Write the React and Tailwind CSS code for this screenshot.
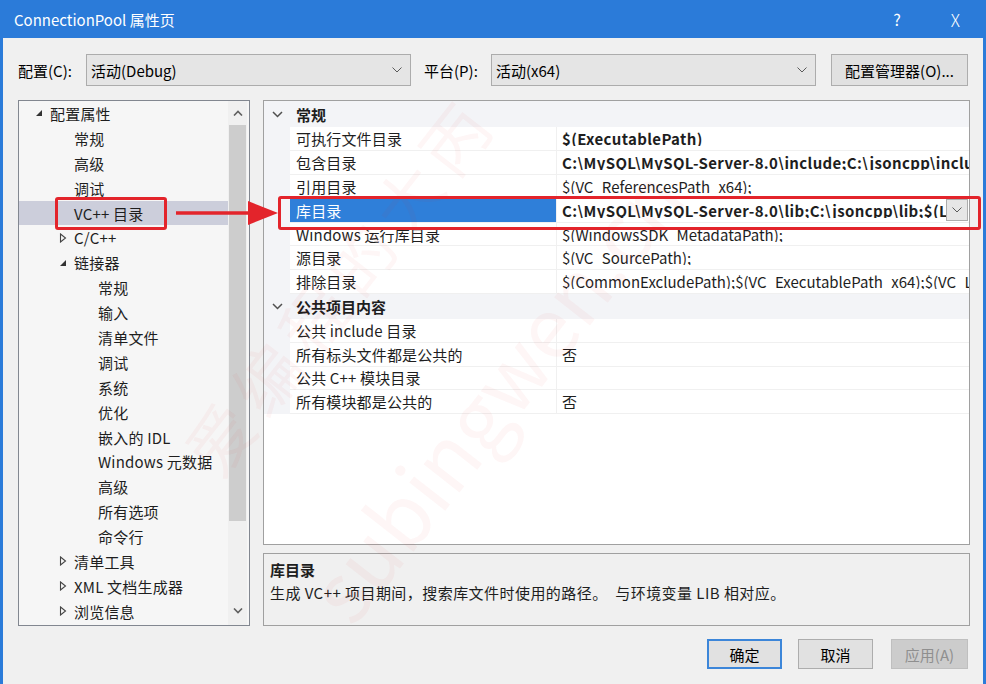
import React from "react";

const FONT = "font-['Noto_Sans_CJK_SC','Noto_Sans',sans-serif]";

function Chevron({ className = "" }) {
  return (
    <svg width="10" height="6" viewBox="0 0 10 6" className={className}>
      <polyline points="0.5,0.5 5,5 9.5,0.5" fill="none" stroke="#5a5a5a" strokeWidth="1" />
    </svg>
  );
}

function Combo({ text }) {
  return (
    <div className="w-[325px] h-[32px] bg-[#e5e5e5] border border-[#acacac] flex items-center pl-[4px] pr-[8px]">
      <span className="flex-1 text-[15px] leading-none text-black">{text}</span>
      <Chevron />
    </div>
  );
}

function TriOpen() {
  return (
    <svg width="8" height="8" viewBox="0 0 8 8">
      <polygon points="7,1 7,7 1,7" fill="#333" />
    </svg>
  );
}
function TriClosed() {
  return (
    <svg width="8" height="10" viewBox="0 0 8 10">
      <polygon points="1.5,1 6.5,5 1.5,9" fill="none" stroke="#444" strokeWidth="1.1" />
    </svg>
  );
}

const tree = [
  { t: "配置属性", l: 0, tri: "open" },
  { t: "常规", l: 1 },
  { t: "高级", l: 1 },
  { t: "调试", l: 1 },
  { t: "VC++ 目录", l: 1, sel: true },
  { t: "C/C++", l: 1, tri: "closed" },
  { t: "链接器", l: 1, tri: "open" },
  { t: "常规", l: 2 },
  { t: "输入", l: 2 },
  { t: "清单文件", l: 2 },
  { t: "调试", l: 2 },
  { t: "系统", l: 2 },
  { t: "优化", l: 2 },
  { t: "嵌入的 IDL", l: 2 },
  { t: "Windows 元数据", l: 2 },
  { t: "高级", l: 2 },
  { t: "所有选项", l: 2 },
  { t: "命令行", l: 2 },
  { t: "清单工具", l: 1, tri: "closed" },
  { t: "XML 文档生成器", l: 1, tri: "closed" },
  { t: "浏览信息", l: 1, tri: "closed" },
];

const indent = ["pl-[12px]", "pl-[36px]", "pl-[60px]"];

function Tree() {
  return (
    <div className="w-[232px] h-full border border-[#828790] bg-[#f6f6f6] flex overflow-hidden">
      <div className="flex-1 overflow-hidden">
        {tree.map((r, i) => (
          <div
            key={i}
            className={`h-[24.9px] flex items-center ${indent[r.l]} ${r.sel ? "bg-[#cccedb]" : ""}`}
          >
            <div className="w-[19px] flex items-center pl-[4px]">
              {r.tri === "open" ? <TriOpen /> : r.tri === "closed" ? <TriClosed /> : null}
            </div>
            <span className="text-[15px] leading-none text-[#1e1e1e] whitespace-nowrap tracking-[0.2px]">{r.t}</span>
          </div>
        ))}
      </div>
      <div className="w-[19px] mr-[2px] flex flex-col items-center bg-[#f0f0f0]">
        <div className="h-[24px] flex items-center justify-center">
          <svg width="10" height="6" viewBox="0 0 10 6">
            <polyline points="1,5.5 5,1.5 9,5.5" fill="none" stroke="#606060" strokeWidth="1.6" />
          </svg>
        </div>
        <div className="w-[17px] h-[396px] bg-[#cdcdcd]" />
        <div className="flex-1" />
        <div className="h-[28px] flex items-center justify-center">
          <svg width="10" height="6" viewBox="0 0 10 6">
            <polyline points="1,0.5 5,4.5 9,0.5" fill="none" stroke="#606060" strokeWidth="1.6" />
          </svg>
        </div>
      </div>
    </div>
  );
}

const sections = [
  {
    h: "常规",
    rows: [
      { n: "可执行文件目录", v: "$(ExecutablePath)", b: true },
      { n: "包含目录", v: "C:\\MySQL\\MySQL-Server-8.0\\include;C:\\jsoncpp\\include;$(IncludePath)", b: true },
      { n: "引用目录", v: "$(VC_ReferencesPath_x64);" },
      { n: "库目录", v: "C:\\MySQL\\MySQL-Server-8.0\\lib;C:\\jsoncpp\\lib;$(LibraryPath)", b: true, sel: true },
      { n: "Windows 运行库目录", v: "$(WindowsSDK_MetadataPath);" },
      { n: "源目录", v: "$(VC_SourcePath);" },
      { n: "排除目录", v: "$(CommonExcludePath);$(VC_ExecutablePath_x64);$(VC_LibraryPath_x64)" },
    ],
  },
  {
    h: "公共项目内容",
    rows: [
      { n: "公共 include 目录", v: "" },
      { n: "所有标头文件都是公共的", v: "否" },
      { n: "公共 C++ 模块目录", v: "" },
      { n: "所有模块都是公共的", v: "否" },
    ],
  },
];

function Grid() {
  return (
    <div className="h-[445px] border border-[#a0a0a0] bg-white overflow-hidden">
      {sections.map((s, si) => (
        <div key={si}>
          <div className={`${si === 0 ? "h-[26px]" : "h-[24.5px]"} bg-[#f3f4f7] flex items-center`}>
            <div className="w-[26px] flex justify-center">
              <svg width="11" height="7" viewBox="0 0 11 7">
                <polyline points="1,1 5.5,5.5 10,1" fill="none" stroke="#505050" strokeWidth="1.5" />
              </svg>
            </div>
            <span className="pl-[6px] text-[15px] leading-none font-bold text-[#1e1e1e]">{s.h}</span>
          </div>
          {s.rows.map((r, ri) => (
            <div key={ri} className="h-[23.9px] flex">
              <div className="w-[26px] bg-[#f3f4f7]" />
              <div
                className={`w-[267px] border-b border-r border-[#f0f0f0] flex items-center pl-[6px] ${
                  r.sel ? "bg-[#2f7fd9] text-white" : "text-[#1e1e1e]"
                }`}
              >
                <span className="text-[15px] leading-none whitespace-nowrap tracking-[0.15px]">{r.n}</span>
              </div>
              <div className="flex-1 min-w-0 border-b border-[#f0f0f0] flex items-center pl-[5px] overflow-hidden">
                <span
                  className={`flex-1 min-w-0 overflow-hidden text-[15px] leading-none whitespace-nowrap text-[#1e1e1e] ${
                    r.b ? "font-bold tracking-[0.35px]" : ""
                  }`}
                >
                  {r.v}
                </span>
                {r.sel ? (
                  <div className="w-[22px] h-[22px] mr-[1px] bg-[#e6e6e6] border border-[#acacac] flex items-center justify-center shrink-0">
                    <Chevron />
                  </div>
                ) : null}
              </div>
            </div>
          ))}
        </div>
      ))}
    </div>
  );
}

export default function App() {
  return (
    <div className={`relative w-[986px] h-[684px] bg-[#2b7bd9] flex flex-col overflow-hidden ${FONT}`}>
      <div className="h-[38px] flex items-center pl-[14px] pr-[26px] text-white shrink-0">
        <span className="flex-1 text-[15px] leading-none">ConnectionPool 属性页</span>
        <span className="text-[16px] leading-none mr-[50px]">?</span>
        <span className="text-[17px] leading-none font-light">X</span>
      </div>
      <div className="flex-1 mx-[3px] bg-[#f0f0f0] flex flex-col pl-[15px] pr-[13px] pt-[16px]">
        <div className="h-[32px] flex items-center">
          <span className="w-[68px] text-[15px] leading-none text-black">配置(C):</span>
          <Combo text="活动(Debug)" />
          <span className="ml-[13px] w-[67px] text-[15px] leading-none text-black">平台(P):</span>
          <Combo text="活动(x64)" />
          <div className="ml-[15px] w-[137px] h-[32px] bg-[#e1e1e1] border border-[#adadad] flex items-center justify-center text-[15px] leading-none text-black">
            配置管理器(O)...
          </div>
        </div>
        <div className="mt-[14px] h-[526px] flex gap-[13px]">
          <Tree />
          <div className="w-[707px] flex flex-col gap-[8px]">
            <Grid />
            <div className="h-[73px] border border-[#a0a0a0] bg-[#f0f0f0] px-[6px] pt-[4px]">
              <div className="text-[15px] leading-[23px] font-bold text-[#1e1e1e]">库目录</div>
              <div className="text-[15px] leading-[23px] text-[#1e1e1e] tracking-[0.45px] whitespace-nowrap">
                生成 VC++ 项目期间，搜索库文件时使用的路径。&nbsp; 与环境变量 LIB 相对应。
              </div>
            </div>
          </div>
        </div>
        <div className="mt-[13px] flex justify-end pr-[2px]">
          <div className="w-[75px] h-[30px] bg-[#e1e1e1] border-2 border-[#3c86d9] flex items-center justify-center text-[15px] leading-none text-black">
            确定
          </div>
          <div className="ml-[16px] w-[75px] h-[30px] bg-[#e1e1e1] border border-[#adadad] flex items-center justify-center text-[15px] leading-none text-black">
            取消
          </div>
          <div className="ml-[18px] w-[77px] h-[30px] bg-[#cccccc] border border-[#bfbfbf] flex items-center justify-center text-[15px] leading-none text-[#8f8f8f]">
            应用(A)
          </div>
        </div>
      </div>

      {/* watermark */}
      <div className="pointer-events-none absolute left-[110px] top-[250px] -rotate-[52deg] text-[66px] leading-none text-[rgba(225,40,40,0.045)] whitespace-nowrap tracking-[10px]">
        爱编程的大丙
      </div>
      <div className="pointer-events-none absolute left-[220px] top-[350px] -rotate-[52deg] text-[84px] leading-none text-[rgba(225,40,40,0.045)] whitespace-nowrap">
        subingwen.cn
      </div>

      {/* red annotation boxes */}
      <div className="absolute left-[55px] top-[197px] w-[112px] h-[33px] border-[3px] border-[#e3242b] rounded-[3px]" />
      <div className="absolute left-[278px] top-[196px] w-[703px] h-[34px] border-[3px] border-[#e3242b] rounded-[3px]" />
      <svg className="absolute left-[170px] top-[198px]" width="110" height="30" viewBox="0 0 110 30">
        <line x1="6" y1="15" x2="82" y2="15" stroke="#e3242b" strokeWidth="3.5" />
        <polygon points="78,3 108,15 78,27" fill="#e3242b" />
      </svg>
    </div>
  );
}
